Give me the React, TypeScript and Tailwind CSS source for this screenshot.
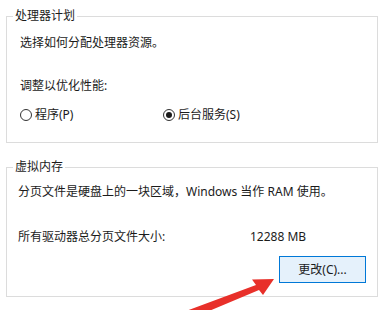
import React from 'react';

const Radio = ({ checked, label }: { checked?: boolean; label: string }) => (
  <label className="flex items-center gap-[3px]">
    <span className="w-[12px] h-[12px] rounded-full border border-[#333333] bg-white flex items-center justify-center">
      {checked && <span className="w-[6px] h-[6px] rounded-full bg-[#1b1b1b]" />}
    </span>
    <span>{label}</span>
  </label>
);

const Arrow = () => (
  <svg className="absolute left-0 top-0 pointer-events-none" width="390" height="310" viewBox="0 0 390 310">
    <polygon points="186,311 256,285 252,279.5 274,279 263,295 259,290 190,319" fill="#e8302a" />
  </svg>
);

export default function App() {
  return (
    <div className="relative w-[390px] h-[310px] overflow-hidden bg-white text-[12px] leading-[16px] text-[#1b1b1b] font-['Noto_Sans','Noto_Sans_CJK_SC',sans-serif]">
      <div className="pl-[6px] pt-[8px]">
        <fieldset className="w-[372px] h-[135px] border border-[#dcdcdc] pl-[13px]">
          <legend className="ml-[-7px] px-[2px]">处理器计划</legend>
          <p className="mt-[11px]">选择如何分配处理器资源。</p>
          <p className="mt-[27px]">调整以优化性能:</p>
          <div className="mt-[13px] flex">
            <div className="w-[143px]">
              <Radio label="程序(P)" />
            </div>
            <Radio checked label="后台服务(S)" />
          </div>
        </fieldset>

        <fieldset className="mt-[16px] w-[372px] h-[138px] border border-[#dcdcdc] pl-[11px] pr-[11px]">
          <legend className="ml-[-5px] px-[2px]">虚拟内存</legend>
          <p className="mt-[9px]">分页文件是硬盘上的一块区域，Windows 当作 RAM 使用。</p>
          <div className="mt-[29px] flex">
            <span className="w-[232px]">所有驱动器总分页文件大小:</span>
            <span>12288 MB</span>
          </div>
          <div className="mt-[11px] flex justify-end">
            <button className="w-[87px] h-[27px] border border-[#0078d7] bg-[#e5f1fb] text-[#1b1b1b]">
              更改(C)...
            </button>
          </div>
        </fieldset>
      </div>
      <Arrow />
    </div>
  );
}
